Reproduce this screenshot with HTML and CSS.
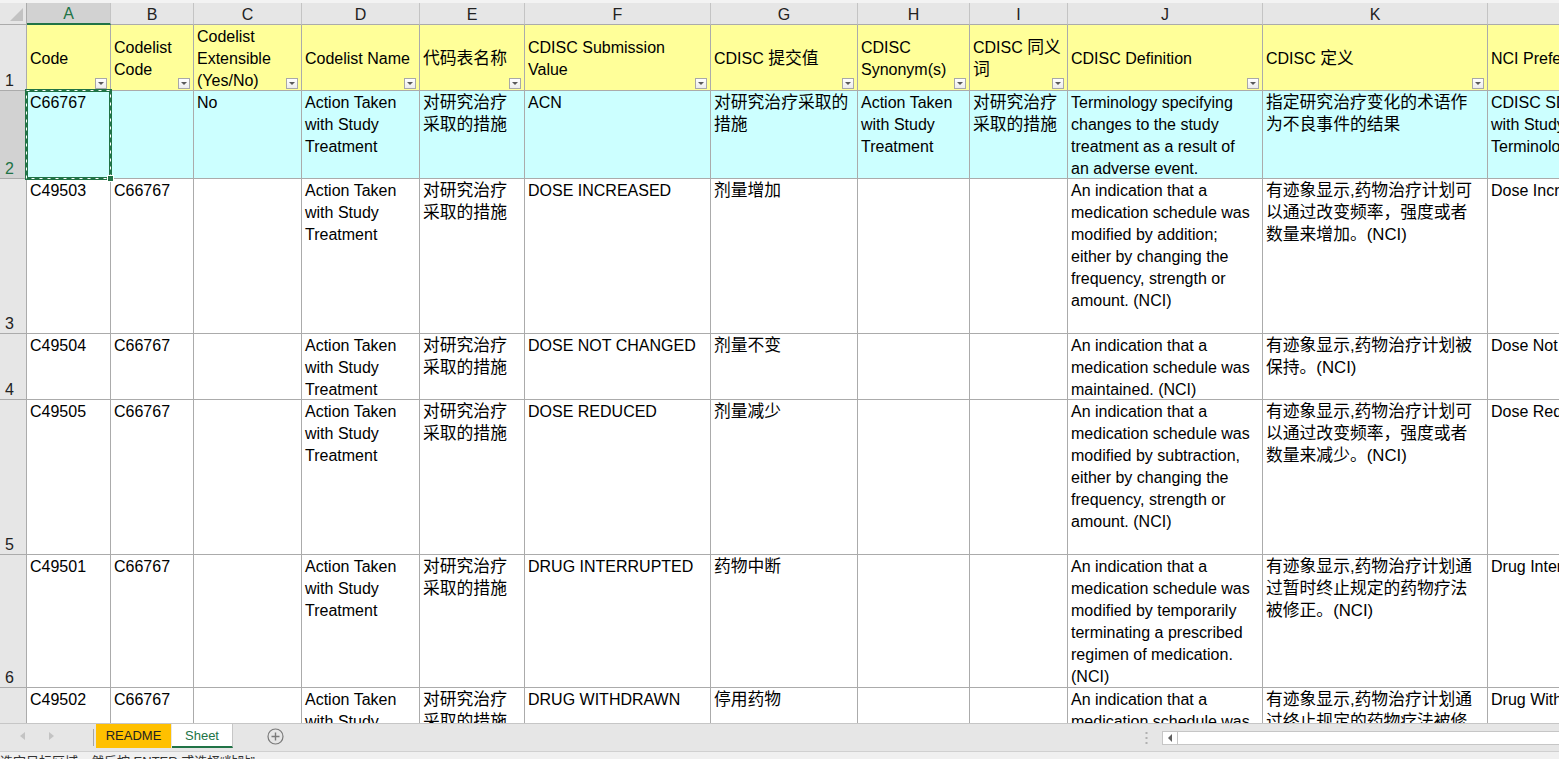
FILE: index.html
```html
<!DOCTYPE html>
<html lang="zh-CN">
<head>
<meta charset="utf-8">
<title>Sheet</title>
<link rel="stylesheet" href="styles.css">
</head>
<body>
<div class="app">
  <div class="topstrip"></div>
  <div class="sheet">
    <!-- column letters -->
    <div class="ch corner"></div>
    <div class="ch sel">A</div>
    <div class="ch">B</div>
    <div class="ch">C</div>
    <div class="ch">D</div>
    <div class="ch">E</div>
    <div class="ch">F</div>
    <div class="ch">G</div>
    <div class="ch">H</div>
    <div class="ch">I</div>
    <div class="ch">J</div>
    <div class="ch">K</div>
    <div class="ch">L</div>

    <!-- row 1 : headers -->
    <div class="rh">1</div>
    <div class="cell h"><span>Code</span><i class="fb"></i></div>
    <div class="cell h"><span>Codelist<br>Code</span><i class="fb"></i></div>
    <div class="cell h"><span>Codelist<br>Extensible<br>(Yes/No)</span><i class="fb"></i></div>
    <div class="cell h"><span>Codelist Name</span><i class="fb"></i></div>
    <div class="cell h z"><span>代码表名称</span><i class="fb"></i></div>
    <div class="cell h"><span>CDISC Submission<br>Value</span><i class="fb"></i></div>
    <div class="cell h"><span>CDISC <b class="z">提交值</b></span><i class="fb"></i></div>
    <div class="cell h"><span>CDISC<br>Synonym(s)</span><i class="fb"></i></div>
    <div class="cell h"><span>CDISC <b class="z">同义</b><br><b class="z">词</b></span><i class="fb"></i></div>
    <div class="cell h"><span>CDISC Definition</span><i class="fb"></i></div>
    <div class="cell h"><span>CDISC <b class="z">定义</b></span><i class="fb"></i></div>
    <div class="cell h"><span>NCI Preferred Term</span><i class="fb"></i></div>

    <!-- row 2 -->
    <div class="rh sel">2</div>
    <div class="cell c">C66767</div>
    <div class="cell c"></div>
    <div class="cell c">No</div>
    <div class="cell c">Action Taken<br>with Study<br>Treatment</div>
    <div class="cell c z">对研究治疗<br>采取的措施</div>
    <div class="cell c">ACN</div>
    <div class="cell c z">对研究治疗采取的<br>措施</div>
    <div class="cell c">Action Taken<br>with Study<br>Treatment</div>
    <div class="cell c z">对研究治疗<br>采取的措施</div>
    <div class="cell c">Terminology specifying<br>changes to the study<br>treatment as a result of<br>an adverse event.</div>
    <div class="cell c z">指定研究治疗变化的术语作<br>为不良事件的结果</div>
    <div class="cell c">CDISC SDTM Action<br>with Study Treatment<br>Terminology</div>

    <!-- row 3 -->
    <div class="rh">3</div>
    <div class="cell">C49503</div>
    <div class="cell">C66767</div>
    <div class="cell"></div>
    <div class="cell">Action Taken<br>with Study<br>Treatment</div>
    <div class="cell z">对研究治疗<br>采取的措施</div>
    <div class="cell">DOSE INCREASED</div>
    <div class="cell z">剂量增加</div>
    <div class="cell"></div>
    <div class="cell"></div>
    <div class="cell">An indication that a<br>medication schedule was<br>modified by addition;<br>either by changing the<br>frequency, strength or<br>amount. (NCI)</div>
    <div class="cell z">有迹象显示,药物治疗计划可<br>以通过改变频率，强度或者<br>数量来增加。(NCI)</div>
    <div class="cell">Dose Increased</div>

    <!-- row 4 -->
    <div class="rh">4</div>
    <div class="cell">C49504</div>
    <div class="cell">C66767</div>
    <div class="cell"></div>
    <div class="cell">Action Taken<br>with Study<br>Treatment</div>
    <div class="cell z">对研究治疗<br>采取的措施</div>
    <div class="cell">DOSE NOT CHANGED</div>
    <div class="cell z">剂量不变</div>
    <div class="cell"></div>
    <div class="cell"></div>
    <div class="cell">An indication that a<br>medication schedule was<br>maintained. (NCI)</div>
    <div class="cell z">有迹象显示,药物治疗计划被<br>保持。(NCI)</div>
    <div class="cell">Dose Not Changed</div>

    <!-- row 5 -->
    <div class="rh">5</div>
    <div class="cell">C49505</div>
    <div class="cell">C66767</div>
    <div class="cell"></div>
    <div class="cell">Action Taken<br>with Study<br>Treatment</div>
    <div class="cell z">对研究治疗<br>采取的措施</div>
    <div class="cell">DOSE REDUCED</div>
    <div class="cell z">剂量减少</div>
    <div class="cell"></div>
    <div class="cell"></div>
    <div class="cell">An indication that a<br>medication schedule was<br>modified by subtraction,<br>either by changing the<br>frequency, strength or<br>amount. (NCI)</div>
    <div class="cell z">有迹象显示,药物治疗计划可<br>以通过改变频率，强度或者<br>数量来减少。(NCI)</div>
    <div class="cell">Dose Reduced</div>

    <!-- row 6 -->
    <div class="rh">6</div>
    <div class="cell">C49501</div>
    <div class="cell">C66767</div>
    <div class="cell"></div>
    <div class="cell">Action Taken<br>with Study<br>Treatment</div>
    <div class="cell z">对研究治疗<br>采取的措施</div>
    <div class="cell">DRUG INTERRUPTED</div>
    <div class="cell z">药物中断</div>
    <div class="cell"></div>
    <div class="cell"></div>
    <div class="cell">An indication that a<br>medication schedule was<br>modified by temporarily<br>terminating a prescribed<br>regimen of medication.<br>(NCI)</div>
    <div class="cell z">有迹象显示,药物治疗计划通<br>过暂时终止规定的药物疗法<br>被修正。(NCI)</div>
    <div class="cell">Drug Interrupted</div>

    <!-- row 7 -->
    <div class="rh">7</div>
    <div class="cell">C49502</div>
    <div class="cell">C66767</div>
    <div class="cell"></div>
    <div class="cell">Action Taken<br>with Study<br>Treatment</div>
    <div class="cell z">对研究治疗<br>采取的措施</div>
    <div class="cell">DRUG WITHDRAWN</div>
    <div class="cell z">停用药物</div>
    <div class="cell"></div>
    <div class="cell"></div>
    <div class="cell">An indication that a<br>medication schedule was<br>modified by terminating a<br>prescribed regimen of<br>medication. (NCI)</div>
    <div class="cell z">有迹象显示,药物治疗计划通<br>过终止规定的药物疗法被修<br>正。(NCI)</div>
    <div class="cell">Drug Withdrawn</div>

    <!-- copy marquee around A2 -->
    <svg class="marquee" width="92" height="95" viewBox="0 0 92 95">
      <rect x="1.5" y="1.5" width="84" height="88" fill="none" stroke="#217346" stroke-width="3"/>
      <rect x="1.5" y="1.5" width="84" height="88" fill="none" stroke="#ffffff" stroke-width="1" stroke-dasharray="3 5"/>
      <rect x="82" y="86" width="7" height="7" fill="#ffffff"/>
      <rect x="83" y="87" width="5" height="5" fill="#217346"/>
    </svg>
  </div>

  <div class="tabbar">
    <svg class="nav" width="93" height="27" viewBox="0 0 93 27">
      <polygon points="25,8 25,16 20,12" fill="#c3c3c3"/>
      <polygon points="49,8 49,16 54,12" fill="#c3c3c3"/>
    </svg>
    <div class="tsep"></div>
    <div class="tab readme">README</div>
    <div class="tab active">Sheet</div>
    <svg class="addbtn" width="17" height="17" viewBox="0 0 17 17">
      <circle cx="8.5" cy="8.5" r="7.5" fill="none" stroke="#7a7a7a" stroke-width="1.2"/>
      <path d="M8.5 4.5v8M4.5 8.5h8" stroke="#7a7a7a" stroke-width="1.4"/>
    </svg>
    <div class="tspacer"></div>
    <svg class="grip" width="3" height="12" viewBox="0 0 3 12">
      <rect x="0.5" y="0" width="2" height="2" fill="#b0b0b0"/>
      <rect x="0.5" y="5" width="2" height="2" fill="#b0b0b0"/>
      <rect x="0.5" y="10" width="2" height="2" fill="#b0b0b0"/>
    </svg>
    <div class="hscroll">
      <div class="harrow">
        <svg width="6" height="8" viewBox="0 0 6 8"><polygon points="5,0 5,8 1,4" fill="#606060"/></svg>
      </div>
    </div>
  </div>

  <div class="status">选定目标区域，然后按 ENTER 或选择“粘贴”</div>
</div>
</body>
</html>
```

FILE: styles.css
```css
html, body {
  margin: 0;
  padding: 0;
}

body {
  font-family: "Liberation Sans", "Noto Sans CJK SC", sans-serif;
  font-size: 16px;
  color: #000;
  background: #ffffff;
  overflow: hidden;
}

.app {
  width: 1559px;
  height: 759px;
  display: flex;
  flex-direction: column;
  overflow: hidden;
}

.topstrip {
  flex: none;
  height: 3px;
  background: #f3f3f3;
}

/* ---------- sheet grid ---------- */
.sheet {
  position: relative;
  flex: none;
  height: 720px;
  overflow: hidden;
  display: grid;
  grid-template-columns: 27px 84px 83px 108px 118px 105px 186px 147px 112px 98px 195px 225px 200px;
  grid-template-rows: 22px 66px 88px 155px 66px 155px 133px 150px;
}

.ch {
  box-sizing: border-box;
  background: #e6e6e6;
  border-right: 1px solid #c4c4c4;
  border-bottom: 1px solid #ababab;
  text-align: center;
  line-height: 21px;
  padding-top: 1px;
  color: #222;
}

.ch.sel {
  background: #d2d2d2;
  color: #217346;
  border-bottom: 2px solid #217346;
  line-height: 20px;
}

.ch.corner {
  position: relative;
  border-right-color: #ababab;
}

.ch.corner::after {
  content: "";
  position: absolute;
  right: 3px;
  bottom: 3px;
  width: 0;
  height: 0;
  border-left: 13px solid transparent;
  border-bottom: 13px solid #c2c2c2;
}

.rh {
  box-sizing: border-box;
  background: #e6e6e6;
  border-right: 1px solid #ababab;
  border-bottom: 1px solid #ababab;
  color: #222;
  display: flex;
  align-items: flex-end;
  padding-left: 5px;
  line-height: 18px;
}

.rh.sel {
  background: #d2d2d2;
  color: #217346;
}

.cell {
  box-sizing: border-box;
  border-right: 1px solid #ababab;
  border-bottom: 1px solid #ababab;
  padding: 1px 3px 0 3px;
  line-height: 22px;
  white-space: nowrap;
  overflow: hidden;
  background: #ffffff;
}

.cell.h {
  background: #ffff99;
  display: flex;
  align-items: center;
  position: relative;
  padding-top: 2px;
}

.cell.c {
  background: #ccffff;
}

.z {
  font-size: 16.8px;
}

b.z {
  font-weight: normal;
}

.fb {
  position: absolute;
  right: 3px;
  bottom: 1px;
  width: 12px;
  height: 11px;
  box-sizing: border-box;
  border: 1px solid #a8a8a8;
  background: linear-gradient(#ffffff, #ececec);
}

.fb::after {
  content: "";
  position: absolute;
  left: 2px;
  top: 3px;
  width: 0;
  height: 0;
  border-left: 3px solid transparent;
  border-right: 3px solid transparent;
  border-top: 3px solid #5a5a5a;
}

.marquee {
  position: absolute;
  left: 25px;
  top: 86px;
}

/* ---------- tab bar ---------- */
.tabbar {
  flex: none;
  height: 28px;
  box-sizing: border-box;
  border-top: 1px solid #c6c6c6;
  background: #e6e6e6;
  display: flex;
  align-items: flex-start;
}

.nav {
  flex: none;
  display: block;
}

.tsep {
  flex: none;
  width: 1px;
  height: 17px;
  margin-top: 5px;
  background: #a6a6a6;
}

.tab {
  flex: none;
  box-sizing: border-box;
  height: 24px;
  font-size: 13px;
  line-height: 23px;
  text-align: center;
}

.tab.readme {
  margin-left: 2px;
  width: 75px;
  background: #ffc000;
  color: #222;
}

.tab.active {
  margin-left: 1px;
  width: 61px;
  background: #ffffff;
  color: #217346;
  border-right: 1px solid #c6c6c6;
  border-bottom: 2px solid #217346;
}

.addbtn {
  flex: none;
  display: block;
  margin-left: 34px;
  margin-top: 4px;
}

.tspacer {
  flex: 1;
}

.grip {
  flex: none;
  display: block;
  margin-top: 8px;
  margin-right: 14px;
}

.hscroll {
  flex: none;
  width: 397px;
  height: 14px;
  margin-top: 7px;
  box-sizing: border-box;
  border: 1px solid #c6c6c6;
  border-right: none;
  background: #ffffff;
  display: flex;
}

.harrow {
  flex: none;
  width: 15px;
  height: 12px;
  box-sizing: border-box;
  border-right: 1px solid #c6c6c6;
  display: flex;
  align-items: center;
  justify-content: center;
}

.harrow svg {
  display: block;
}

/* ---------- status bar ---------- */
.status {
  flex: 1;
  box-sizing: border-box;
  border-top: 1px solid #d0d0d0;
  background: #f0f0f0;
  font-size: 13px;
  line-height: 15px;
  padding-top: 2px;
  white-space: nowrap;
  color: #333;
}
```
